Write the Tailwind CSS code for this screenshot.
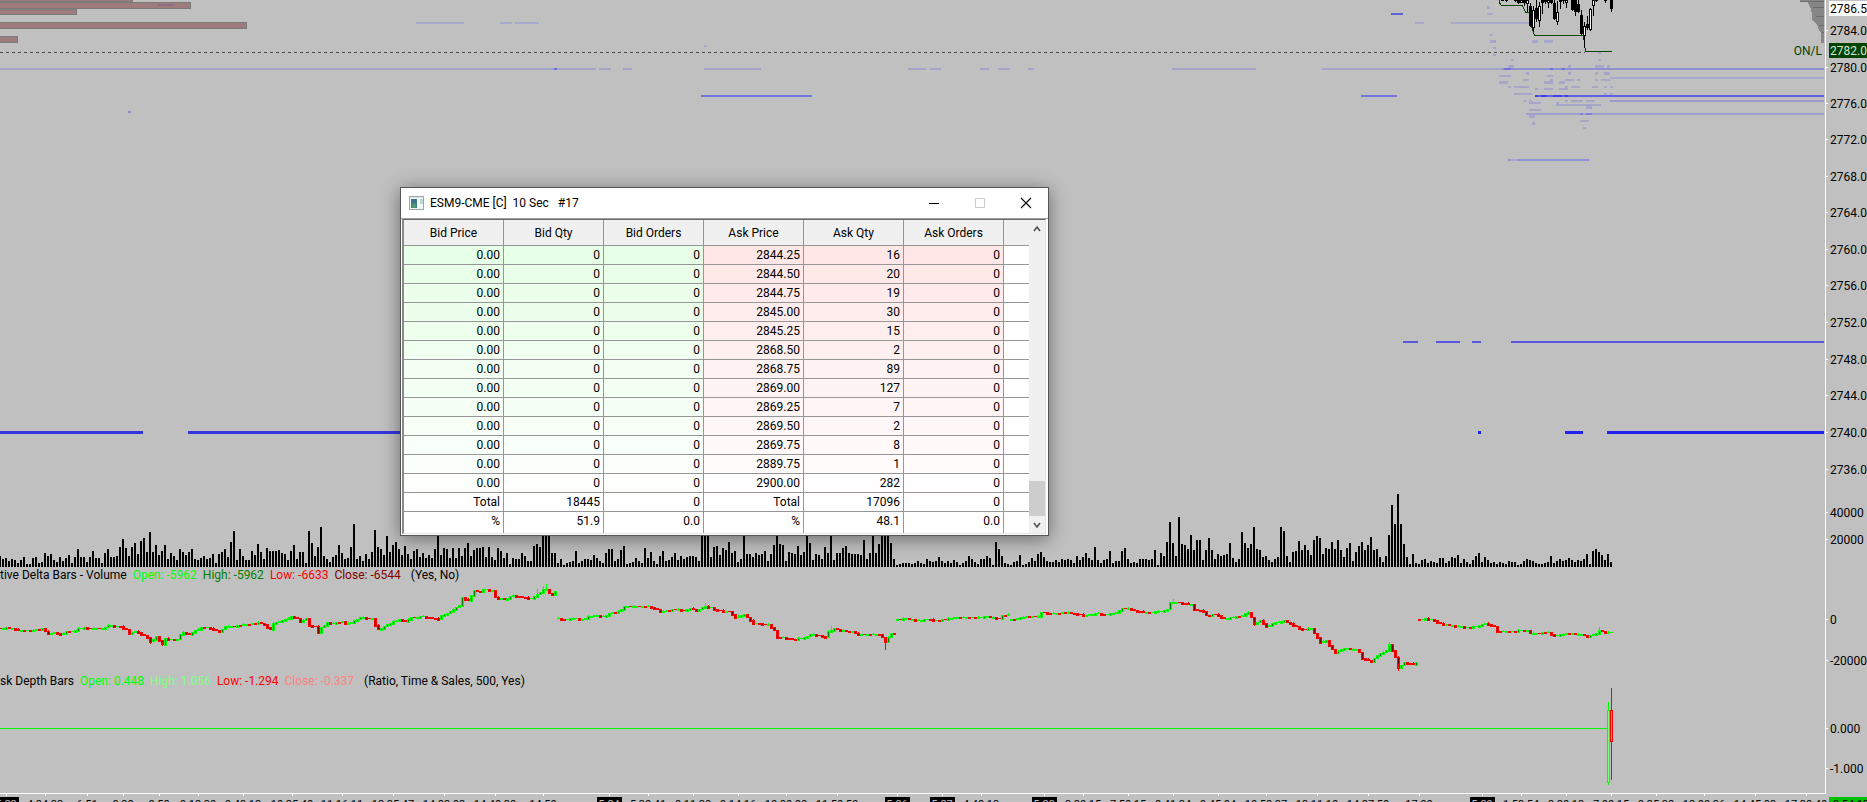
<!DOCTYPE html>
<html lang="en">
<head>
    <meta charset="UTF-8">
    <meta name="viewport" content="width=device-width, initial-scale=1.0">
    <title>ESM9-CME [C] 10 Sec #17</title>
    <script src="https://cdn.jsdelivr.net/npm/@tailwindcss/browser@4"></script>
</head>
<body class="relative h-screen overflow-hidden bg-[#c0c0c0] font-['Roboto','Open_Sans',sans-serif] text-[12px] leading-4 text-black">

<!-- Chart panes, each with its own scale on the right -->
<main class="grid h-full grid-cols-[minmax(0,1fr)_42px] grid-rows-[minmax(0,1fr)_94px_106px_118px_9px]">
    <svg id="price-pane" class="h-full w-full" shape-rendering="crispEdges"></svg>
    <svg id="price-scale" class="h-full w-full border-l border-white"></svg>

    <svg id="volume-pane" class="h-full w-full" shape-rendering="crispEdges"></svg>
    <svg id="volume-scale" class="h-full w-full border-l border-white"></svg>

    <section class="grid">
        <svg id="delta-pane" class="col-start-1 row-start-1 h-full w-full" shape-rendering="crispEdges"></svg>
        <p class="col-start-1 row-start-1 flex gap-1.5 whitespace-nowrap leading-3">
            <span>tive Delta Bars - Volume</span>
            <span class="text-[#00ff00]">Open: -5962</span>
            <span class="text-[#008000]">High: -5962</span>
            <span class="text-[#ff0000]">Low: -6633</span>
            <span class="text-[#800000]">Close: -6544</span>
            <span class="pl-1">(Yes, No)</span>
        </p>
    </section>
    <svg id="delta-scale" class="h-full w-full border-l border-white"></svg>

    <section class="grid">
        <svg id="depth-pane" class="col-start-1 row-start-1 h-full w-full" shape-rendering="crispEdges"></svg>
        <p class="col-start-1 row-start-1 flex gap-1.5 whitespace-nowrap leading-3">
            <span>sk Depth Bars</span>
            <span class="text-[#00ff00]">Open: 0.448</span>
            <span class="text-[#80ff80]">High: 1.056</span>
            <span class="text-[#ff0000]">Low: -1.294</span>
            <span class="text-[#ff8080]">Close: -0.337</span>
            <span class="pl-1">(Ratio, Time &amp; Sales, 500, Yes)</span>
        </p>
    </section>
    <svg id="depth-scale" class="h-full w-full border-l border-white"></svg>

    <svg id="time-scale" class="col-span-2 h-full w-full"></svg>
</main>

<!-- Depth of market window -->
<section class="absolute left-[400px] top-[187px] w-[649px] border border-[#555] bg-white shadow-[0_3px_18px_rgba(0,0,0,0.45)]">
    <header class="flex h-[30px] items-center pl-2 pr-4">
        <svg class="mr-1.5 h-[14px] w-[15px]" viewBox="0 0 15 14" shape-rendering="crispEdges">
            <rect width="15" height="14" fill="#9aa5ad"/>
            <rect x="1" y="1" width="13" height="1" fill="#dfe6ea"/>
            <rect x="1" y="2" width="13" height="11" fill="#f4f7f8"/>
            <rect x="2" y="3" width="6" height="9" fill="#3f7f7c"/>
            <rect x="3" y="3" width="4" height="3" fill="#3c6f93"/>
            <rect x="3" y="8" width="4" height="4" fill="#4e9a6a"/>
            <rect x="11" y="3" width="3" height="5" fill="#b9d8d2"/>
        </svg>
        <h1 class="flex-1 whitespace-pre">ESM9-CME [C]  10 Sec   #17</h1>
        <div class="flex items-center gap-[34px]">
            <button aria-label="Minimize" class="h-3 w-3"><svg class="h-3 w-3" viewBox="0 0 12 12"><path d="M1 6.5h10" stroke="#000"/></svg></button>
            <button aria-label="Maximize" class="h-3 w-3" disabled><svg class="h-3 w-3" viewBox="0 0 12 12"><path d="M1.5 1.5h9v9h-9z" fill="none" stroke="#ccc"/></svg></button>
            <button aria-label="Close" class="h-3 w-3"><svg class="h-3 w-3" viewBox="0 0 12 12"><path d="M1 1l10 10M11 1L1 11" stroke="#000" stroke-width="1.1"/></svg></button>
        </div>
    </header>
    <div class="border-t border-[#a0a0a0] pb-px pl-px pr-0.5">
        <div class="flex border-l-2 border-t border-b border-r border-b-[#e3e3e3] border-l-[#8a8a8a] border-r-[#e3e3e3] border-t-[#696969]">
            <table class="flex-1 table-fixed border-separate border-spacing-0">
                <thead>
                    <tr class="h-[26px] bg-[#f0f0f0]">
                        <th scope="col" class="w-[100px] border-b border-r border-[#969696] p-0 font-normal">Bid Price</th>
                        <th scope="col" class="w-[100px] border-b border-r border-[#969696] p-0 font-normal">Bid Qty</th>
                        <th scope="col" class="w-[100px] border-b border-r border-[#969696] p-0 font-normal">Bid Orders</th>
                        <th scope="col" class="w-[100px] border-b border-r border-[#969696] p-0 font-normal">Ask Price</th>
                        <th scope="col" class="w-[100px] border-b border-r border-[#969696] p-0 font-normal">Ask Qty</th>
                        <th scope="col" class="w-[100px] border-b border-r border-[#969696] p-0 font-normal">Ask Orders</th>
                        <td class="border-b border-[#969696] p-0"></td>
                    </tr>
                </thead>
                <tbody id="depth-rows"></tbody>
            </table>
            <div class="flex w-4 flex-col bg-[#f0f0f0]">
                <button aria-label="Scroll up" class="flex h-[18px] items-center justify-center"><svg class="h-2 w-2" viewBox="0 0 8 8"><path d="M1 6l3-4 3 4" fill="none" stroke="#505050" stroke-width="1.6"/></svg></button>
                <div class="flex-1"></div>
                <div class="h-[35px] bg-[#cdcdcd]"></div>
                <button aria-label="Scroll down" class="flex h-[17px] items-center justify-center"><svg class="h-2 w-2" viewBox="0 0 8 8"><path d="M1 2l3 4 3-4" fill="none" stroke="#505050" stroke-width="1.6"/></svg></button>
            </div>
        </div>
    </div>
</section>

<script>
    const get = id => document.getElementById(id);
    const rect = (x, y, w, h, fill) => `<rect x="${x}" y="${y}" width="${w}" height="${h}" fill="${fill}"/>`;

    // ---- Depth table ----
    const asks = [['2844.25', 16], ['2844.50', 20], ['2844.75', 19], ['2845.00', 30], ['2845.25', 15], ['2868.50', 2], ['2868.75', 89],
        ['2869.00', 127], ['2869.25', 7], ['2869.50', 2], ['2869.75', 8], ['2889.75', 1], ['2900.00', 282]];
    const rows = asks.map(([price, qty]) => ['0.00', 0, 0, price, qty, 0]);
    rows.push(['Total', 18445, 0, 'Total', 17096, 0], ['%', '51.9', '0.0', '%', '48.1', '0.0']);

    get('depth-rows').innerHTML = rows.map((row, r) => {
        const last = r === rows.length - 1;
        const tint = Math.min(255, 231 + Math.round(r * 1.8));
        const cells = row.map((value, c) => {
            const color = c < 3 ? `rgb(${tint},255,${tint})` : `rgb(255,${tint},${tint})`;
            return last
                ? `<td class="h-[21px] border-r border-[#969696] p-0 pr-[3px] pb-1 text-right">${value}</td>`
                : `<td class="h-[19px] border-b border-r border-[#969696] p-0 pr-[3px] text-right" style="background:${color}">${value}</td>`;
        }).join('');
        return `<tr>${cells}<td class="${last ? '' : 'border-b border-[#969696]'}"></td></tr>`;
    }).join('');

    // ---- Price pane ----
    let price = '';
    // volume by price, left side
    [[-2, -3, 135, 5], [-2, 2, 193, 7], [-2, 9, 79, 6], [-2, 22, 249, 7], [-2, 36, 20, 7]].forEach(([x, y, w, h]) => {
        price += rect(x, y, w, h, '#7b7b7b') + rect(x, y + 1, w - 1, h - 2, '#9f7c7c');
    });
    price += rect(158, 4, 15, 2, '#926c80');
    price += '<path d="M1800 0v2h8l1 3 2 4 1 5v5l2 3 3 2 2 6 2 3v10h3V0z" fill="#868686"/><path d="M1800 1h24M1813 7.5h11M1816 16.5h8M1819 25.5h5M1822 32.5h2" stroke="#6c6c6c"/>';
    price += '<path d="M0 52.5H1585" stroke="#484848" stroke-dasharray="3 3"/>';

    // resting liquidity: [y, height, color, [from, to], ...]
    [
        [22, 2, '#a9a9cb', [416, 464], [500, 512], [515, 539], [1415, 1424], [1451, 1530]],
        [45, 2, '#a9a9cb', [704, 707]],
        [13, 2, '#6161dc', [1391, 1403]],
        [111, 2, '#8c8cd4', [128, 131]],
        [68, 2, '#a4a4ca', [0, 596], [599, 611], [623, 632], [704, 761], [908, 926], [930, 941], [980, 989], [998, 1010], [1028, 1034], [1172, 1256], [1322, 1502]],
        [68, 2, '#9090d0', [1502, 1824]],
        [68, 2, '#7070d8', [554, 557], [1504, 1511], [1550, 1553], [1562, 1565]],
        [77, 2, '#a9a9cb', [1610, 1824]],
        [95, 2, '#7474dc', [701, 812], [1361, 1397]],
        [95, 2, '#6060e4', [1535, 1824]],
        [95, 2, '#4040e4', [1535, 1538], [1541, 1547], [1553, 1562], [1565, 1568]],
        [100, 2, '#9c9ccc', [1610, 1824]],
        [113, 2, '#a0a0cc', [1526, 1824]],
        [113, 2, '#8080d8', [1580, 1583], [1586, 1592]],
        [159, 2, '#9292d4', [1508, 1589]],
        [341, 2, '#5656de', [1403, 1418], [1436, 1460], [1472, 1481], [1511, 1824]],
        [431, 3, '#3535de', [0, 143], [188, 402]],
        [431, 3, '#2222f0', [1478, 1481], [1565, 1583], [1607, 1824]]
    ].forEach(([y, h, color, ...spans]) => spans.forEach(([a, b]) => price += rect(a, y, b - a, h, color)));

    // short lived quotes: x, y, width, height
    [
        [1487, 6, 3, 3], [1487, 13, 6, 2], [1490, 34, 3, 2], [1490, 40, 6, 3], [1493, 47, 3, 2], [1493, 54, 3, 2], [1511, 59, 3, 2],
        [1532, 40, 6, 3], [1544, 40, 9, 3], [1508, 65, 6, 3], [1568, 65, 3, 3], [1598, 52, 3, 2], [1598, 59, 3, 2], [1595, 65, 9, 3], [1607, 65, 3, 3],
        [1526, 72, 3, 3], [1568, 72, 3, 3], [1595, 72, 3, 3], [1604, 72, 6, 3], [1499, 75, 12, 2], [1547, 75, 6, 2], [1499, 81, 9, 3], [1523, 79, 6, 2],
        [1544, 81, 9, 3], [1559, 81, 6, 3], [1550, 79, 3, 2], [1565, 79, 9, 2], [1577, 79, 3, 2], [1595, 79, 3, 2], [1601, 79, 9, 2],
        [1508, 86, 3, 2], [1514, 86, 15, 2], [1535, 88, 3, 2], [1544, 88, 9, 2], [1559, 88, 9, 2], [1565, 86, 3, 2], [1571, 86, 9, 2], [1592, 86, 6, 2], [1604, 86, 3, 2], [1610, 86, 3, 2],
        [1514, 93, 18, 2], [1604, 93, 3, 2], [1610, 93, 3, 2], [1523, 100, 3, 2], [1529, 100, 3, 2], [1529, 102, 12, 2], [1556, 102, 3, 2], [1565, 100, 3, 2], [1571, 100, 12, 2], [1586, 100, 9, 2],
        [1556, 104, 45, 2], [1586, 106, 6, 3], [1529, 109, 12, 2], [1529, 115, 6, 3], [1532, 122, 3, 3], [1580, 120, 9, 2], [1583, 127, 3, 2]
    ].forEach(([x, y, w, h]) => price += rect(x, y, w, h, '#a6a6c8'));
    price += rect(1511, 159, 6, 2, '#aaaac8');

    // overnight low
    price += '<path d="M1499.5 0v3l2 2.500h21l3 7h4l2 14 3 9h49l2 16h26" fill="none" stroke="#004400"/>';

    // candles: x, high, open/close top, bottom, low, filled
    [
        [1502, 0, 0, 1, 1, 0], [1506, 0, 0, 1, 2, 0], [1515, 0, 0, 1, 2, 1], [1518, 0, 0, 3, 4, 1], [1521, 0, 0, 3, 3, 0], [1524, 0, 0, 3, 6, 1],
        [1527, 0, 0, 4, 12, 0], [1530, 3, 6, 26, 27, 1], [1533, 6, 10, 28, 32, 0], [1536, 0, 8, 19, 22, 1], [1539, 2, 6, 21, 27, 0], [1542, 0, 0, 3, 14, 1],
        [1545, 0, 0, 2, 4, 1], [1548, 0, 0, 3, 8, 0], [1551, 0, 0, 3, 4, 1], [1554, 0, 3, 19, 20, 1], [1557, 1, 12, 22, 25, 0], [1560, 0, 0, 2, 9, 0],
        [1563, 0, 0, 1, 4, 1], [1566, 0, 0, 3, 8, 0], [1572, 0, 0, 10, 11, 1], [1575, 0, 0, 12, 16, 1], [1578, 0, 4, 12, 13, 1], [1581, 10, 15, 34, 35, 1],
        [1584, 22, 26, 36, 48, 0], [1587, 16, 24, 28, 30, 1], [1590, 8, 9, 30, 31, 0], [1593, 0, 0, 6, 16, 0], [1596, 0, 0, 1, 2, 1], [1605, 0, 0, 1, 3, 1], [1611, 0, 0, 9, 12, 1]
    ].forEach(([x, hi, top, bottom, lo, filled]) => {
        price += rect(x, hi, 1, lo - hi, '#000') + rect(x - 1, top, 3, bottom - top, '#000');
        if (!filled && bottom - top > 2) price += rect(x, top + 1, 1, bottom - top - 2, '#fff');
    });
    price += '<text x="1822" y="55" text-anchor="end" font-size="12" fill="#004400">ON/L</text>';
    get('price-pane').innerHTML = price;

    // ---- Volume bars, one every three pixels ----
    const volume = [
        11,8,9,6,8,7,4,7,10,3,3,9,10,4,5,14,11,13,7,5,10,6,9,12,4,10,18,10,10,5,10,16,9,9,4,14,18,10,10,11,20,28,19,11,20,24,13,26,29,15,
        35,15,22,12,16,22,8,14,11,7,18,15,12,15,18,8,7,9,11,8,9,13,4,13,15,18,10,25,36,7,18,11,7,7,16,12,23,15,8,19,16,16,16,17,14,13,7,16,22,8,
        15,15,4,36,24,11,20,40,11,8,5,10,12,22,14,8,9,20,43,8,11,6,13,8,15,37,20,18,12,31,15,22,25,18,12,21,13,8,16,18,10,14,9,12,9,18,34,12,19,18,
        9,19,9,19,11,19,24,11,17,19,19,20,10,20,10,7,19,16,9,14,3,9,8,8,14,11,6,6,21,23,20,33,33,33,14,14,4,8,2,4,5,6,16,4,6,8,8,7,12,9,
        6,4,14,18,18,6,8,17,21,3,4,5,9,6,4,19,9,15,6,3,11,16,6,7,10,14,7,11,8,10,11,11,10,6,33,33,33,10,20,21,12,19,17,25,14,16,5,8,33,13,
        13,10,14,12,13,16,6,13,22,33,23,22,6,15,14,13,21,12,15,33,24,7,13,12,8,20,14,33,7,14,14,19,21,14,13,13,13,12,27,8,14,33,14,23,33,33,33,24,8,2,
        3,4,4,4,3,4,6,4,3,8,6,5,6,10,6,4,6,4,7,5,2,4,6,11,8,5,3,8,8,11,9,2,25,18,
        11,4,3,2,5,6,12,2,3,5,9,6,13,15,10,6,5,5,7,5,8,7,8,7,4,11,7,10,14,9,7,20,7,4,7,8,16,4,6,6,16,19,8,4,5,4,8,8,8,7,
        8,17,2,14,11,25,45,24,11,50,23,22,18,32,17,27,27,7,17,29,17,8,13,11,12,13,24,9,5,8,35,24,19,23,40,18,17,10,11,7,5,8,10,40,36,11,5,15,16,26,
        17,22,17,12,27,31,29,13,19,18,25,18,27,17,10,19,24,6,15,21,25,17,22,30,17,18,10,5,11,32,62,43,73,43,23,10,3,13,4,3,7,8,4,6,5,4,9,9,4,6,
        10,9,12,4,8,5,3,7,11,14,5,10,7,4,5,3,5,4,3,6,5,5,2,3,6,8,7,6,4,3,3,4,5,11,4,6,8,6,7,9,7,5,7,6,8,13,3,16,18,15,12,7,13,5
    ];
    get('volume-pane').innerHTML = volume.map((h, i) => rect(3 * i - 1, 92 - h, 2, h, '#000')).join('');

    // ---- Cumulative delta: bar index, y ----
    const sessions = [
        [0,56,2,55,4,56,6,58,8,58,10,58,12,57,14,56,16,61,18,60,20,62,22,59,24,59,26,56,28,55,30,56,34,56,36,53,40,54,42,57,43,61,45,59,46,60,48,63,49,65,50,69,52,64,53,68,54,72,55,66,57,67,59,67,60,62,61,60,63,62,65,58,67,55,69,55,71,57,73,59,75,54,77,54,81,52,85,51,86,50,88,52,90,57,91,51,93,49,95,47,97,44,99,46,100,49,102,46,103,53,105,54,106,60,107,55,109,50,111,51,114,49,115,51,117,50,120,45,124,46,125,53,126,57,128,54,131,49,133,47,135,49,137,45,141,44,143,45,146,47,147,43,149,41,151,37,153,33,154,25,156,28,158,18,160,19,161,17,164,18,165,25,168,27,171,23,174,25,177,26,179,22,181,17,182,17,183,21,184,22,185,19],
        [186,46,188,47,191,46,194,47,196,44,198,43,201,44,203,41,206,39,208,34,211,34,216,34,219,37,220,39,222,38,225,37,228,38,230,36,232,38,235,34,237,35,239,38,243,39,245,45,248,42,250,48,251,51,256,52,258,58,259,65,261,65,265,67,268,65,270,62,273,63,275,65,276,59,278,56,280,58,284,59,286,62,293,62,294,65,295,69,297,61,298,61],
        [299,47,302,46,305,48,309,47,313,48,318,45,327,45,328,44,333,46,334,43,336,42],
        [337,47,339,46,342,44,346,44,347,40,351,41,356,40,359,42,362,43,365,41,369,42,372,40,374,36,376,36,378,38,382,40,387,39,389,37,390,30,393,30,395,31,397,32,398,37,401,39,402,43,405,42,408,46,413,44,416,40,417,45,418,51,420,48,422,54,424,51,428,48,430,51,432,54,434,57,437,56,439,65,440,70,442,68,444,77,445,80,448,76,452,77,453,80,454,86,457,89,459,83,462,78,463,72,464,78,465,85,466,95,468,90,471,92,472,90],
        [473,47,475,46,478,48,480,51,483,53,489,55,493,53,495,51,498,54,499,59,502,59,509,58,510,61,516,60,518,63,522,61,527,62,529,64,532,61,533,58,535,60,537,60]
    ];
    const wicks = {50: [70, 72], 54: [70, 74], 181: [14, 18], 182: [12, 18], 179: [17, 24], 235: [31, 35], 277: [54, 58], 295: [65, 78], 391: [27, 31], 418: [50, 54], 463: [70, 74], 466: [92, 99], 533: [55, 60]};
    let delta = '';
    sessions.forEach(points => {
        let previous = points[1];
        for (let p = 0; p < points.length - 2; p += 2) {
            const [x0, y0, x1, y1] = points.slice(p, p + 4);
            for (let i = p ? x0 + 1 : x0; i <= x1; i++) {
                const y = Math.round(y0 + (y1 - y0) * (i - x0) / (x1 - x0));
                const down = y === previous ? (i * 7) % 5 < 2 : y > previous;
                const color = down ? '#ff0000' : '#00ff00';
                const top = Math.min(y, previous) + 3;
                const height = Math.abs(y - previous) + (i % 3 ? 2 : 1);
                delta += rect(3 * i - 1, top, 3, height, color);
                if (height > 2) delta += rect(3 * i, top + 1, 1, height - 2, down ? '#800000' : '#008000');
                if (i % 5 === 1) delta += rect(3 * i, top - 1, 1, 1, color);
                if (wicks[i]) delta += rect(3 * i, wicks[i][0] + 3, 1, wicks[i][1] - wicks[i][0], color);
                previous = y;
            }
        }
    });
    get('delta-pane').innerHTML = delta;

    // ---- Bid/ask depth ratio ----
    get('depth-pane').innerHTML = rect(0, 53, 1607, 1, '#00ff00')
        + rect(1608, 27, 1, 83, '#00ff00') + rect(1607, 35, 3, 73, '#00ff00') + rect(1608, 36, 1, 71, '#80ff80')
        + rect(1611, 13, 1, 92, '#ff0000') + rect(1610, 35, 3, 32, '#ff0000') + rect(1611, 36, 1, 30, '#ff8080');

    // ---- Scales ----
    const scale = (id, labels) => {
        get(id).innerHTML += labels.map(([text, y]) =>
            rect(0, y, 2, 1, '#fff') + `<text x="4" y="${y + 5}" font-size="12">${text}</text>`).join('');
    };
    scale('price-scale', [['2784.00', 30], ['2780.00', 67], ['2776.00', 103], ['2772.00', 139], ['2768.00', 176], ['2764.00', 212], ['2760.00', 249],
        ['2756.00', 285], ['2752.00', 322], ['2748.00', 359], ['2744.00', 395], ['2740.00', 432], ['2736.00', 469]]);
    get('price-scale').innerHTML += rect(3, 1, 40, 15, '#fff') + '<text x="4" y="13" font-size="12">2786.50</text>'
        + rect(3, 43, 40, 15, '#004400') + '<text x="4" y="55" font-size="12" fill="#d8e8d8">2782.00</text>';
    scale('volume-scale', [['40000', 37], ['20000', 64]]);
    scale('delta-scale', [['0', 50], ['-20000', 91]]);
    scale('depth-scale', [['0.000', 53], ['-1.000', 93]]);

    let time = rect(0, 0, 1826, 1, '#fff');
    [['5-23', 6], ['4:24:33', 45], ['6:51', 87], ['8:30', 123], ['8:50', 159], ['9:12:30', 198], ['9:43:13', 243], ['10:25:40', 292], ['11:16:11', 342],
        ['12:35:47', 393], ['14:03:03', 444], ['14:40:30', 495], ['14:50', 543], ['5-24', 609], ['5:30:41', 648], ['8:11:30', 693], ['9:14:16', 738],
        ['10:00:00', 786], ['11:50:50', 837], ['5-26', 897], ['5-27', 942], ['4:40:13', 981], ['5-28', 1044], ['3:20:15', 1083], ['7:50:15', 1128],
        ['8:41:34', 1173], ['9:45:04', 1218], ['10:50:37', 1266], ['13:11:10', 1317], ['14:27:50', 1368], ['17:00', 1419], ['5-29', 1482], ['1:53:54', 1521],
        ['3:20:13', 1566], ['7:00:15', 1611], ['9:35:30', 1656], ['12:00:36', 1704], ['14:45:03', 1755], ['17:30:40', 1806]
    ].forEach(([text, x]) => {
        const day = text.includes('-');
        time += rect(x, 1, 1, 2, '#fff');
        if (day) time += rect(x - 12, 4, 25, 6, '#000');
        time += `<text x="${x}" y="15" text-anchor="middle" font-size="11" fill="${day ? '#c0c0c0' : '#000'}">${text}</text>`;
    });
    time += rect(1829, 4, 40, 6, '#00c000') + '<text x="1833" y="15" font-size="11">2:54:13</text>';
    get('time-scale').innerHTML = time;
</script>

</body>
</html>
